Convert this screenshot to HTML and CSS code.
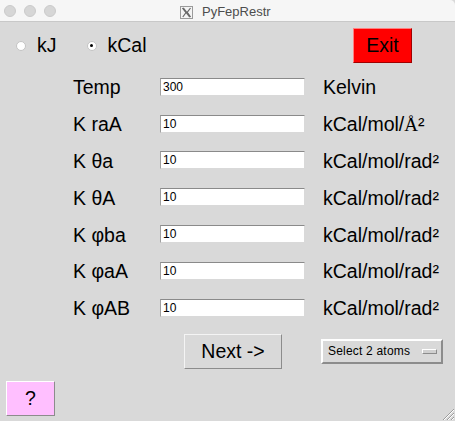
FILE: index.html
```html
<!DOCTYPE html>
<html>
<head>
<meta charset="utf-8">
<title>PyFepRestr</title>
<link rel="stylesheet" href="styles.css">
</head>
<body>
<div class="window">
  <div class="titlebar">
    <div class="lights">
      <span class="light"></span><span class="light"></span><span class="light"></span>
    </div>
    <div class="title">
      <svg class="xicon" width="13" height="13" viewBox="0 0 13 13">
        <rect x="0.5" y="0.5" width="12" height="12" fill="#f4f4f4" stroke="#9a9a9a"/>
        <path d="M2.5 2 L6 6.5 L2.8 11 M10.5 2 L7.2 6.3 L10.5 11" stroke="#6a6a6a" stroke-width="1.2" fill="none"/>
        <path d="M3 2 L10 11" stroke="#6a6a6a" stroke-width="1.8" fill="none"/>
      </svg>
      <span>PyFepRestr</span>
    </div>
  </div>

  <div class="toprow">
    <label class="radio"><span class="dot"></span><span>kJ</span></label>
    <label class="radio"><span class="dot on"></span><span>kCal</span></label>
    <button class="exit">Exit</button>
  </div>

  <div class="form">
    <span class="lbl">Temp</span><input class="entry" type="text" value="300"><span class="unit">Kelvin</span>
    <span class="lbl">K raA</span><input class="entry" type="text" value="10"><span class="unit">kCal/mol/<span class="ang">Å</span>²</span>
    <span class="lbl">K θa</span><input class="entry" type="text" value="10"><span class="unit">kCal/mol/rad²</span>
    <span class="lbl">K θA</span><input class="entry" type="text" value="10"><span class="unit">kCal/mol/rad²</span>
    <span class="lbl">K φba</span><input class="entry" type="text" value="10"><span class="unit">kCal/mol/rad²</span>
    <span class="lbl">K φaA</span><input class="entry" type="text" value="10"><span class="unit">kCal/mol/rad²</span>
    <span class="lbl">K φAB</span><input class="entry" type="text" value="10"><span class="unit">kCal/mol/rad²</span>
  </div>

  <div class="actions">
    <button class="next">Next -&gt;</button>
    <div class="select"><span>Select 2 atoms</span><span class="ind"></span></div>
  </div>

  <div class="bottom">
    <button class="help">?</button>
    <svg class="grip" width="15" height="15" viewBox="0 0 15 15">
      <path d="M14 3 L3 14 M14 7 L7 14 M14 11 L11 14" stroke="#9c9c9c" stroke-width="1"/>
      <path d="M14 4 L4 14 M14 8 L8 14 M14 12 L12 14" stroke="#ffffff" stroke-width="1"/>
    </svg>
  </div>
</div>
</body>
</html>
```

FILE: styles.css
```css
* { box-sizing: border-box; }
html, body { margin: 0; padding: 0; }
body {
  width: 455px;
  height: 421px;
  overflow: hidden;
  background: #d9d9d9;
  font-family: "Liberation Sans", Arial, sans-serif;
  color: #000;
}
.window {
  position: relative;
  width: 455px;
  height: 421px;
  background: #d9d9d9;
}
.titlebar {
  height: 22px;
  background: #f6f6f6;
  border-bottom: 1px solid #c8c8c8;
  border-top-right-radius: 5px;
  display: flex;
  align-items: center;
  position: relative;
}
.lights {
  display: flex;
  gap: 8px;
  padding-left: 4px;
}
.light {
  width: 12px;
  height: 12px;
  border-radius: 50%;
  background: #d6d6d6;
  border: 1px solid #cbcbcb;
}
.title {
  position: absolute;
  left: 180px;
  top: 4px;
  display: flex;
  align-items: center;
  gap: 9px;
  font-size: 13px;
  color: #4d4d4d;
  line-height: 15px;
}
.xicon { display: block; margin-top: 1px; }

.toprow {
  display: flex;
  align-items: center;
  padding-top: 6px;
  height: 41px;
}
.radio {
  display: flex;
  align-items: center;
  font-size: 19.5px;
}
.radio:first-child { margin-left: 16px; }
.radio:nth-child(2) { margin-left: 30px; }
.dot {
  width: 10px;
  height: 10px;
  border-radius: 50%;
  background: #fff;
  border: 1px solid #c4c4c4;
  margin-right: 11px;
  position: relative;
}
.dot.on::after {
  content: "";
  position: absolute;
  left: 2.5px;
  top: 2.5px;
  width: 3px;
  height: 3px;
  border-radius: 50%;
  background: #000;
}
.exit {
  margin-left: auto;
  margin-right: 43px;
  width: 59px;
  height: 35px;
  background: #ff0000;
  border: 1px solid;
  border-color: #ff8080 #a00000 #a00000 #ff8080;
  font-family: "Liberation Sans", Arial, sans-serif;
  font-size: 19.5px;
  color: #000;
  padding: 0;
}

.form {
  display: grid;
  grid-template-columns: 87px 145px auto;
  grid-auto-rows: 36.8px;
  align-items: center;
  padding-left: 73px;
  margin-top: 6px;
}
.lbl, .unit {
  font-size: 19.5px;
  line-height: 22px;
  white-space: nowrap;
}
.unit { padding-left: 18px; }
.ang { font-family: "Liberation Serif", serif; font-size: 19px; }
.entry {
  width: 145px;
  height: 18px;
  margin: 0 0 1px 0;
  padding: 0 2px;
  background: #fff;
  border: 1px solid;
  border-color: #8a8a8a #d9d9d9 #d9d9d9 #a0a0a0;
  font-family: "Liberation Sans", Arial, sans-serif;
  font-size: 12px;
  color: #000;
  outline: none;
}

.actions {
  display: flex;
  align-items: center;
  margin-top: 7px;
  height: 35px;
}
.next {
  margin-left: 184px;
  width: 98px;
  height: 35px;
  background: #d9d9d9;
  border: 1px solid;
  border-color: #f4f4f4 #8c8c8c #8c8c8c #f4f4f4;
  font-family: "Liberation Sans", Arial, sans-serif;
  font-size: 19.5px;
  color: #000;
  padding: 0;
}
.select {
  margin-left: 39px;
  width: 122px;
  height: 25px;
  border: 2px solid;
  border-color: #ffffff #8c8c8c #8c8c8c #ffffff;
  background: #d9d9d9;
  display: flex;
  align-items: center;
  padding-left: 5px;
  font-size: 12px;
  letter-spacing: 0.2px;
  color: #000;
}
.ind {
  margin-left: 12px;
  width: 15px;
  height: 5px;
  border: 1px solid;
  border-color: #ffffff #8c8c8c #8c8c8c #ffffff;
  background: #d0d0d0;
}

.bottom {
  display: flex;
  align-items: flex-end;
  margin-top: 12px;
  height: 40px;
}
.help {
  margin-left: 6px;
  margin-bottom: 5px;
  width: 49px;
  height: 35px;
  background: #ffbfff;
  border: 1px solid;
  border-color: #ffffff #8c8c8c #8c8c8c #ffffff;
  font-family: "Liberation Sans", Arial, sans-serif;
  font-size: 19.5px;
  color: #000;
  padding: 0;
}
.grip {
  margin-left: auto;
  display: block;
}
```
